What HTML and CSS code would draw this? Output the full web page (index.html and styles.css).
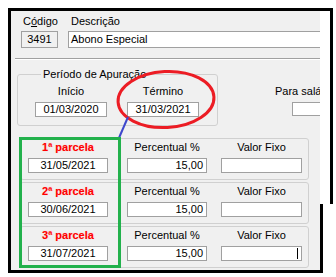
FILE: index.html
```html
<!DOCTYPE html>
<html lang="pt-BR">
<head>
    <meta charset="UTF-8">
    <title>Verba - Período de Apuração</title>
    <link rel="stylesheet" href="styles.css">
</head>
<body>

    <!-- Janela capturada -->
    <div class="frame">

        <!-- Código / Descrição -->
        <div class="ident">
            <div class="cod">
                <div class="lbl">C<u>ó</u>digo</div>
                <div class="box box-off">3491</div>
            </div>
            <div class="desc">
                <div class="lbl">Descrição</div>
                <div class="box box-left">Abono Especial</div>
            </div>
        </div>

        <div class="sep"></div>

        <!-- Período -->
        <div class="period-row">
            <fieldset class="periodo">
                <legend>Período de Apuração</legend>
                <div class="dates">
                    <div class="dcol">
                        <div class="lbl">Início</div>
                        <div class="box">01/03/2020</div>
                    </div>
                    <div class="dcol dcol-2">
                        <div class="lbl">Término</div>
                        <div class="box">31/03/2021</div>
                    </div>
                </div>
            </fieldset>
            <div class="salario">
                <div class="lbl">Para salário</div>
                <div class="box"></div>
            </div>
        </div>

        <!-- Parcelas -->
        <div class="parcelas">
            <div class="parcela">
                <div class="pcol">
                    <div class="lbl titulo">1ª parcela</div>
                    <div class="box">31/05/2021</div>
                </div>
                <div class="pcol pcol-perc">
                    <div class="lbl">Percentual %</div>
                    <div class="box box-num">15,00</div>
                </div>
                <div class="pcol pcol-valor">
                    <div class="lbl">Valor Fixo</div>
                    <div class="box"></div>
                </div>
            </div>
            <div class="parcela">
                <div class="pcol">
                    <div class="lbl titulo">2ª parcela</div>
                    <div class="box">30/06/2021</div>
                </div>
                <div class="pcol pcol-perc">
                    <div class="lbl">Percentual %</div>
                    <div class="box box-num">15,00</div>
                </div>
                <div class="pcol pcol-valor">
                    <div class="lbl">Valor Fixo</div>
                    <div class="box"></div>
                </div>
            </div>
            <div class="parcela">
                <div class="pcol">
                    <div class="lbl titulo">3ª parcela</div>
                    <div class="box">31/07/2021</div>
                </div>
                <div class="pcol pcol-perc">
                    <div class="lbl">Percentual %</div>
                    <div class="box box-num">15,00</div>
                </div>
                <div class="pcol pcol-valor">
                    <div class="lbl">Valor Fixo</div>
                    <div class="box box-num"><span class="caret"></span></div>
                </div>
            </div>
        </div>
    </div>

    <!-- Marcações desenhadas por cima -->
    <svg class="marks" width="336" height="277" viewBox="0 0 336 277">
        <path d="M320 9.5 H331.5 V204 M321.5 204 V273" fill="none" stroke="#000" stroke-width="3"/>
        <ellipse cx="166" cy="99.5" rx="48" ry="28" transform="rotate(-3 166 99.5)" fill="none" stroke="#ec1c24" stroke-width="3"/>
        <line x1="128" y1="117" x2="118.5" y2="139" stroke="#3f48cc" stroke-width="2"/>
        <rect x="20.5" y="138.5" width="99" height="128" fill="none" stroke="#22b14c" stroke-width="3"/>
    </svg>

</body>
</html>
```

FILE: styles.css
```css
body {
    margin: 0;
    background-color: #fff;
    font-family: "Liberation Sans", Arial, sans-serif;
    font-size: 11px;
    color: #000;
}

/* Moldura da captura */
.frame {
    margin: 8px 0 0 8px;
    width: 309px;
    height: 259px;
    border: 3px solid #000;
    border-right: none;
    background-color: #f0f0f0;
    overflow: hidden;
}

/* Marcações por cima da captura */
.marks {
    position: absolute;
    top: 0;
    left: 0;
    pointer-events: none;
}

.lbl {
    line-height: 13px;
    white-space: nowrap;
}

.box {
    box-sizing: border-box;
    height: 15px;
    margin-top: 4px;
    border: 1px solid #a0a0a0;
    background-color: #fff;
    line-height: 13px;
    text-align: center;
    white-space: nowrap;
    overflow: hidden;
}

.box-off {
    background-color: #f0f0f0;
}

.box-left {
    text-align: left;
    padding-left: 2px;
}

.box-num {
    display: flex;
    justify-content: flex-end;
    align-items: center;
    padding-right: 3px;
}

.caret {
    width: 1px;
    height: 11px;
    background-color: #000;
}

/* Código / Descrição */
.ident {
    display: flex;
    padding: 4px 0 0 10px;
}

.ident .box {
    height: 17px;
    margin-top: 3px;
    line-height: 15px;
}

.cod {
    width: 37px;
    flex-shrink: 0;
}

.cod .lbl {
    padding-left: 2px;
}

.desc {
    margin-left: 10px;
    width: 270px;
    flex-shrink: 0;
}

.desc .lbl {
    padding-left: 3px;
}

.sep {
    margin: 10px 0 0 4px;
    border-top: 1px solid #a0a0a0;
    border-bottom: 1px solid #fff;
}

/* Período de apuração */
.period-row {
    display: flex;
    align-items: flex-start;
    margin-top: 8px;
}

.periodo {
    box-sizing: border-box;
    flex-shrink: 0;
    width: 201px;
    margin: 0 0 0 6px;
    padding: 4px 0 8px 17px;
    border: 1px solid #d0d0d0;
    border-radius: 3px;
}

.periodo legend {
    margin-left: 6px;
    padding: 0 2px;
    line-height: 13px;
}

.dates {
    display: flex;
}

.dcol {
    width: 72px;
    text-align: center;
}

.dcol-2 {
    margin-left: 20px;
}

.salario {
    flex-shrink: 0;
    margin: 17px 0 0 57px;
}

.salario .box {
    width: 60px;
    height: 14px;
    margin-left: 17px;
}

/* Parcelas */
.parcelas {
    margin: 12px 0 0 9px;
}

.parcela {
    box-sizing: border-box;
    display: flex;
    width: 289px;
    height: 42px;
    margin-bottom: 2px;
    padding: 2px 0 0 7px;
    border: 1px solid #d0d0d0;
    border-radius: 3px;
}

.pcol {
    width: 80px;
    text-align: center;
}

.pcol-perc {
    margin-left: 19px;
}

.pcol-valor {
    width: 81px;
    margin-left: 14px;
}

.titulo {
    color: #f00;
    font-weight: bold;
    text-shadow: 0 0 1px rgba(255, 140, 140, 0.6);
}
```
